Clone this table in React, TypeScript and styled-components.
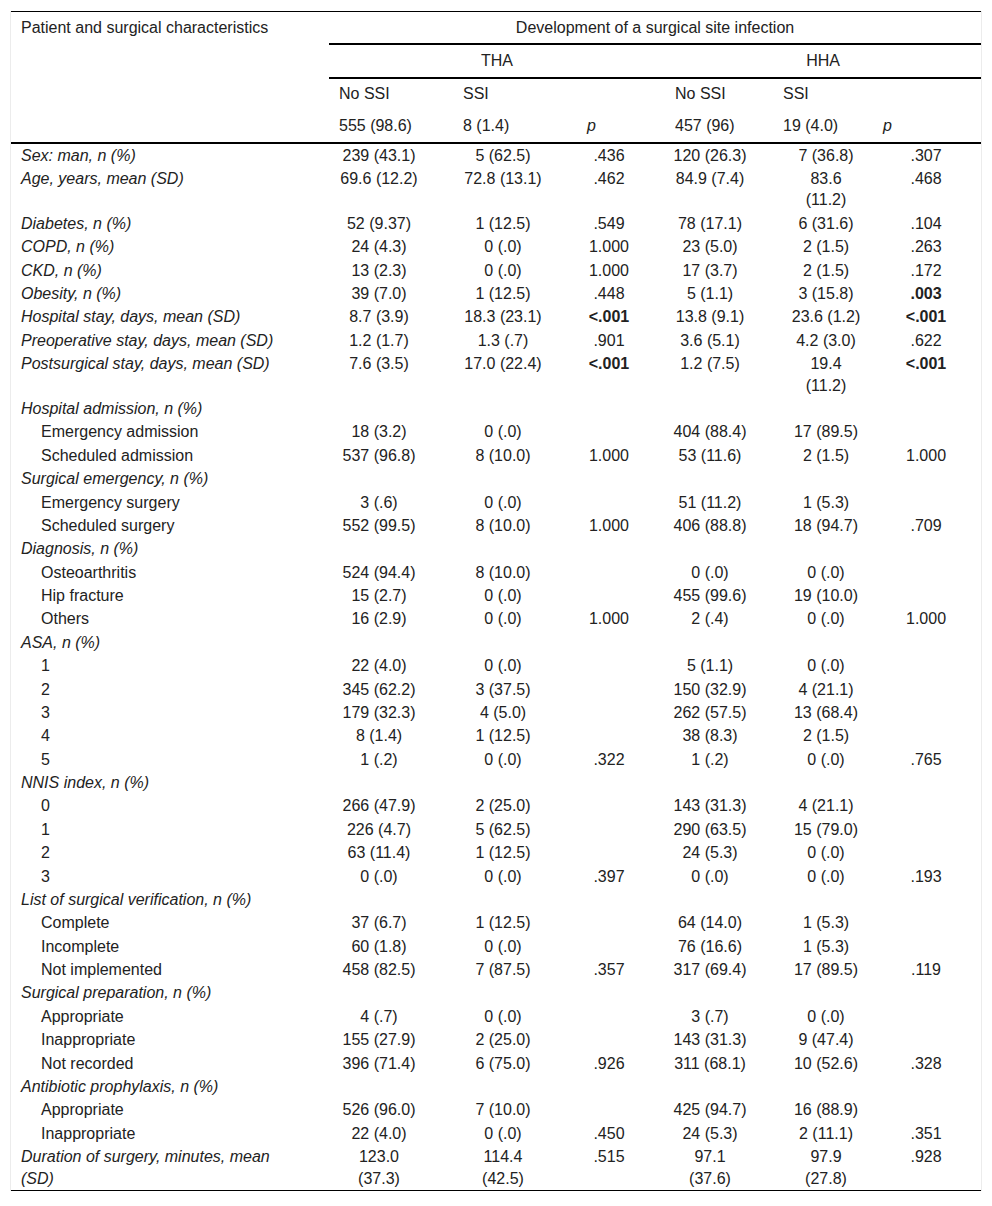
import React from "react";
import styled, { createGlobalStyle } from "styled-components";

const GlobalStyle = createGlobalStyle`
  html, body { margin: 0; padding: 0; background: #fff; }
  body {
    font-family: "Liberation Sans", Arial, Helvetica, sans-serif;
    font-size: 16px;
    color: #222;
  }
`;

const Frame = styled.div`
  margin: 11px 10px 0 10px;
  border-left: 1px solid #ececec;
  border-right: 1px solid #ececec;
`;

const Table = styled.table`
  width: 100%;
  table-layout: fixed;
  border-collapse: collapse;
  border-top: 1px solid #000;
  border-bottom: 1px solid #000;
`;

const Th = styled.th<{ $rule?: boolean }>`
  font-weight: normal;
  text-align: left;
  vertical-align: top;
  line-height: 22.4px;
  padding: 4.5px 10px 4.5px 10px;
  border-bottom: ${(p) => (p.$rule ? "2px solid #000" : "none")};
`;

const GroupTh = styled(Th)`
  text-align: center;
`;

const PHead = styled.span`
  font-style: italic;
`;

const Label = styled.td<{ $sub?: boolean }>`
  vertical-align: top;
  line-height: 21.6px;
  padding: 0.9px 40px 0.9px ${(p) => (p.$sub ? "30px" : "10px")};
  font-style: ${(p) => (p.$sub ? "normal" : "italic")};
`;

const Cell = styled.td<{ $pl: number; $pr: number; $bold?: boolean }>`
  vertical-align: top;
  text-align: center;
  line-height: 21.6px;
  padding: 0.9px ${(p) => p.$pr}px 0.9px ${(p) => p.$pl}px;
  font-weight: ${(p) => (p.$bold ? "bold" : "normal")};
`;

type Col = { width: number; pl: number; pr: number };

const COLS: Col[] = [
  { width: 124, pl: 10, pr: 34 },
  { width: 124, pl: 10, pr: 34 },
  { width: 88, pl: 10, pr: 34 },
  { width: 108, pl: 7.5, pr: 25.5 },
  { width: 100, pl: 15.5, pr: 9.5 },
  { width: 108, pl: 17, pr: 19 },
];

type Row = { label: string; sub?: boolean; values?: string[] };

const B = "*";

const ROWS: Row[] = [
  { label: "Sex: man, n (%)", values: ["239 (43.1)", "5 (62.5)", ".436", "120 (26.3)", "7 (36.8)", ".307"] },
  { label: "Age, years, mean (SD)", values: ["69.6 (12.2)", "72.8 (13.1)", ".462", "84.9 (7.4)", "83.6 (11.2)", ".468"] },
  { label: "Diabetes, n (%)", values: ["52 (9.37)", "1 (12.5)", ".549", "78 (17.1)", "6 (31.6)", ".104"] },
  { label: "COPD, n (%)", values: ["24 (4.3)", "0 (.0)", "1.000", "23 (5.0)", "2 (1.5)", ".263"] },
  { label: "CKD, n (%)", values: ["13 (2.3)", "0 (.0)", "1.000", "17 (3.7)", "2 (1.5)", ".172"] },
  { label: "Obesity, n (%)", values: ["39 (7.0)", "1 (12.5)", ".448", "5 (1.1)", "3 (15.8)", B + ".003"] },
  { label: "Hospital stay, days, mean (SD)", values: ["8.7 (3.9)", "18.3 (23.1)", B + "<.001", "13.8 (9.1)", "23.6 (1.2)", B + "<.001"] },
  { label: "Preoperative stay, days, mean (SD)", values: ["1.2 (1.7)", "1.3 (.7)", ".901", "3.6 (5.1)", "4.2 (3.0)", ".622"] },
  { label: "Postsurgical stay, days, mean (SD)", values: ["7.6 (3.5)", "17.0 (22.4)", B + "<.001", "1.2 (7.5)", "19.4 (11.2)", B + "<.001"] },
  { label: "Hospital admission, n (%)" },
  { label: "Emergency admission", sub: true, values: ["18 (3.2)", "0 (.0)", "", "404 (88.4)", "17 (89.5)", ""] },
  { label: "Scheduled admission", sub: true, values: ["537 (96.8)", "8 (10.0)", "1.000", "53 (11.6)", "2 (1.5)", "1.000"] },
  { label: "Surgical emergency, n (%)" },
  { label: "Emergency surgery", sub: true, values: ["3 (.6)", "0 (.0)", "", "51 (11.2)", "1 (5.3)", ""] },
  { label: "Scheduled surgery", sub: true, values: ["552 (99.5)", "8 (10.0)", "1.000", "406 (88.8)", "18 (94.7)", ".709"] },
  { label: "Diagnosis, n (%)" },
  { label: "Osteoarthritis", sub: true, values: ["524 (94.4)", "8 (10.0)", "", "0 (.0)", "0 (.0)", ""] },
  { label: "Hip fracture", sub: true, values: ["15 (2.7)", "0 (.0)", "", "455 (99.6)", "19 (10.0)", ""] },
  { label: "Others", sub: true, values: ["16 (2.9)", "0 (.0)", "1.000", "2 (.4)", "0 (.0)", "1.000"] },
  { label: "ASA, n (%)" },
  { label: "1", sub: true, values: ["22 (4.0)", "0 (.0)", "", "5 (1.1)", "0 (.0)", ""] },
  { label: "2", sub: true, values: ["345 (62.2)", "3 (37.5)", "", "150 (32.9)", "4 (21.1)", ""] },
  { label: "3", sub: true, values: ["179 (32.3)", "4 (5.0)", "", "262 (57.5)", "13 (68.4)", ""] },
  { label: "4", sub: true, values: ["8 (1.4)", "1 (12.5)", "", "38 (8.3)", "2 (1.5)", ""] },
  { label: "5", sub: true, values: ["1 (.2)", "0 (.0)", ".322", "1 (.2)", "0 (.0)", ".765"] },
  { label: "NNIS index, n (%)" },
  { label: "0", sub: true, values: ["266 (47.9)", "2 (25.0)", "", "143 (31.3)", "4 (21.1)", ""] },
  { label: "1", sub: true, values: ["226 (4.7)", "5 (62.5)", "", "290 (63.5)", "15 (79.0)", ""] },
  { label: "2", sub: true, values: ["63 (11.4)", "1 (12.5)", "", "24 (5.3)", "0 (.0)", ""] },
  { label: "3", sub: true, values: ["0 (.0)", "0 (.0)", ".397", "0 (.0)", "0 (.0)", ".193"] },
  { label: "List of surgical verification, n (%)" },
  { label: "Complete", sub: true, values: ["37 (6.7)", "1 (12.5)", "", "64 (14.0)", "1 (5.3)", ""] },
  { label: "Incomplete", sub: true, values: ["60 (1.8)", "0 (.0)", "", "76 (16.6)", "1 (5.3)", ""] },
  { label: "Not implemented", sub: true, values: ["458 (82.5)", "7 (87.5)", ".357", "317 (69.4)", "17 (89.5)", ".119"] },
  { label: "Surgical preparation, n (%)" },
  { label: "Appropriate", sub: true, values: ["4 (.7)", "0 (.0)", "", "3 (.7)", "0 (.0)", ""] },
  { label: "Inappropriate", sub: true, values: ["155 (27.9)", "2 (25.0)", "", "143 (31.3)", "9 (47.4)", ""] },
  { label: "Not recorded", sub: true, values: ["396 (71.4)", "6 (75.0)", ".926", "311 (68.1)", "10 (52.6)", ".328"] },
  { label: "Antibiotic prophylaxis, n (%)" },
  { label: "Appropriate", sub: true, values: ["526 (96.0)", "7 (10.0)", "", "425 (94.7)", "16 (88.9)", ""] },
  { label: "Inappropriate", sub: true, values: ["22 (4.0)", "0 (.0)", ".450", "24 (5.3)", "2 (11.1)", ".351"] },
  { label: "Duration of surgery, minutes, mean (SD)", values: ["123.0 (37.3)", "114.4 (42.5)", ".515", "97.1 (37.6)", "97.9 (27.8)", ".928"] },
];

const FIRST_COL = 318;

export default function App() {
  return (
    <>
      <GlobalStyle />
      <Frame>
        <Table>
          <colgroup>
            <col style={{ width: FIRST_COL }} />
            {COLS.map((c, i) => (
              <col key={i} style={{ width: c.width }} />
            ))}
          </colgroup>
          <thead>
            <tr>
              <Th rowSpan={4} $rule>
                Patient and surgical characteristics
              </Th>
              <GroupTh colSpan={6} $rule>
                Development of a surgical site infection
              </GroupTh>
            </tr>
            <tr>
              <GroupTh colSpan={3} $rule>
                THA
              </GroupTh>
              <GroupTh colSpan={3} $rule>
                HHA
              </GroupTh>
            </tr>
            <tr>
              <Th>No SSI</Th>
              <Th>SSI</Th>
              <Th />
              <Th>No SSI</Th>
              <Th>SSI</Th>
              <Th />
            </tr>
            <tr>
              <Th $rule>555 (98.6)</Th>
              <Th $rule>8 (1.4)</Th>
              <Th $rule>
                <PHead>p</PHead>
              </Th>
              <Th $rule>457 (96)</Th>
              <Th $rule>19 (4.0)</Th>
              <Th $rule>
                <PHead>p</PHead>
              </Th>
            </tr>
          </thead>
          <tbody>
            {ROWS.map((r, i) => (
              <tr key={i}>
                <Label $sub={r.sub} colSpan={r.values ? 1 : 7}>
                  {r.label}
                </Label>
                {r.values &&
                  r.values.map((v, j) => {
                    const bold = v.startsWith(B);
                    return (
                      <Cell key={j} $pl={COLS[j].pl} $pr={COLS[j].pr} $bold={bold}>
                        {bold ? v.slice(1) : v}
                      </Cell>
                    );
                  })}
              </tr>
            ))}
          </tbody>
        </Table>
      </Frame>
    </>
  );
}
